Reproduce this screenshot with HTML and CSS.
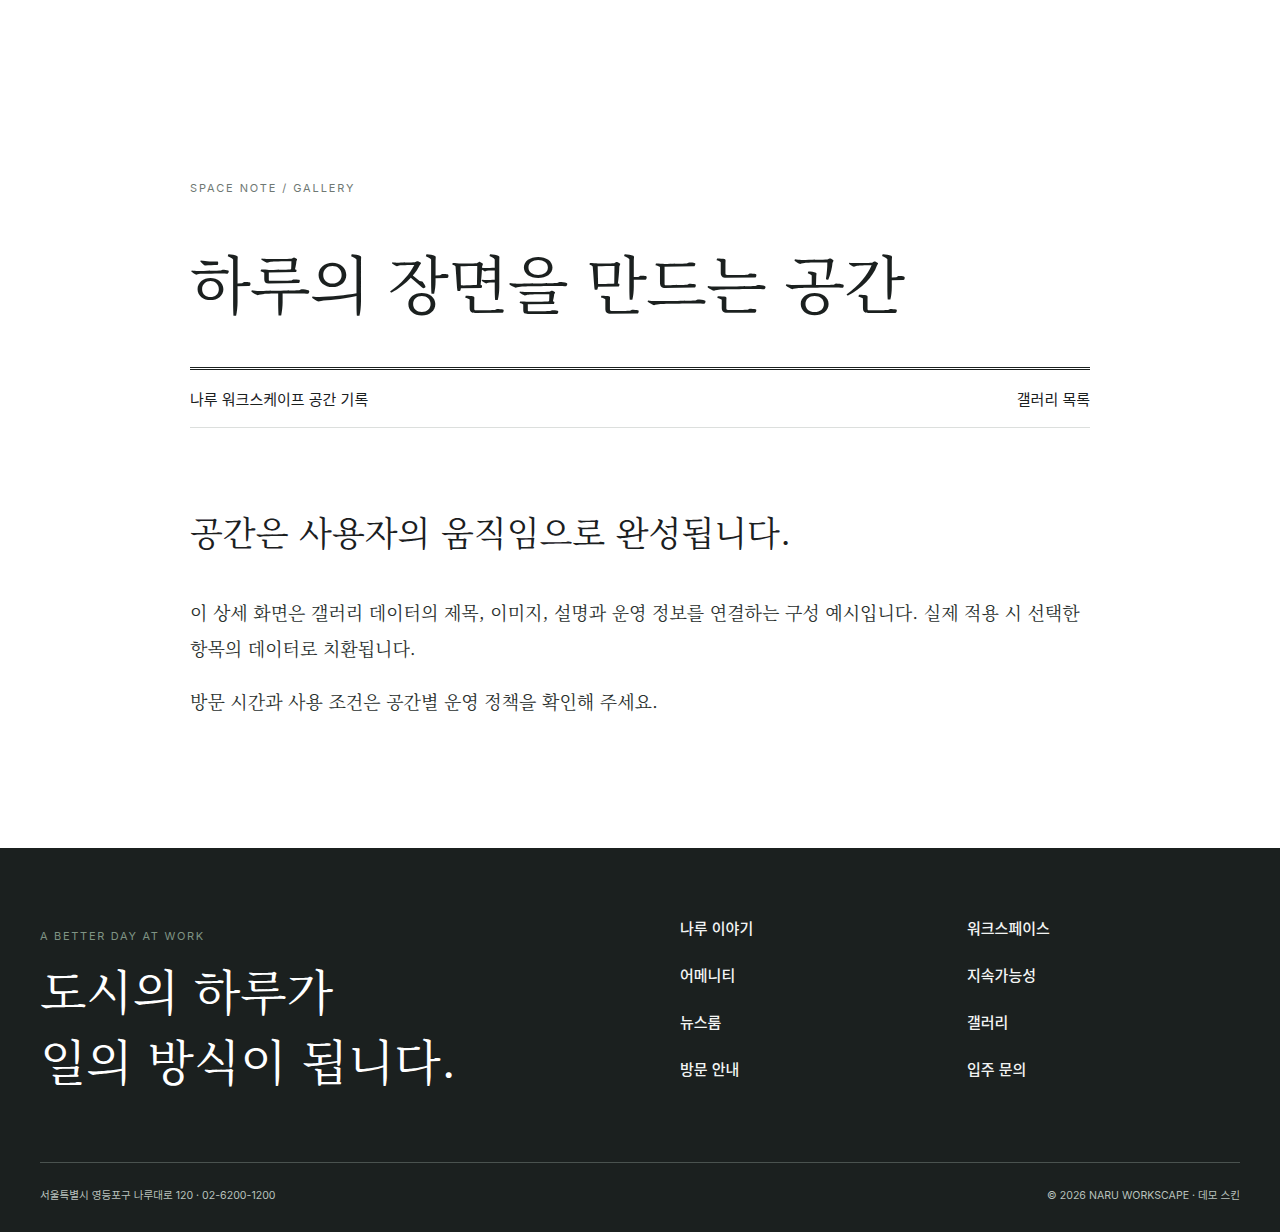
FILE: index.html
```html
<!DOCTYPE html>
<html lang="ko">
<head>
<meta charset="utf-8">
<title>하루의 장면을 만드는 공간</title>
<link rel="stylesheet" href="styles.css">
</head>
<body>
<main class="detail">
  <p class="eyebrow">SPACE NOTE / GALLERY</p>
  <h1 class="title">하루의 장면을 만드는 공간</h1>
  <div class="meta">
    <span>나루 워크스케이프 공간 기록</span>
    <a class="meta-link" href="#">갤러리 목록</a>
  </div>
  <section class="body">
    <h2 class="lead">공간은 사용자의 움직임으로 완성됩니다.</h2>
    <p>이 상세 화면은 갤러리 데이터의 제목, 이미지, 설명과 운영 정보를 연결하는 구성 예시입니다. 실제 적용 시 선택한 항목의 데이터로 치환됩니다.</p>
    <p>방문 시간과 사용 조건은 공간별 운영 정책을 확인해 주세요.</p>
  </section>
</main>
<footer class="footer">
  <div class="footer-top">
    <div class="footer-brand">
      <p class="footer-eyebrow">A BETTER DAY AT WORK</p>
      <p class="footer-heading">도시의 하루가<br>일의 방식이 됩니다.</p>
    </div>
    <nav class="footer-nav">
      <a href="#">나루 이야기</a>
      <a href="#">워크스페이스</a>
      <a href="#">어메니티</a>
      <a href="#">지속가능성</a>
      <a href="#">뉴스룸</a>
      <a href="#">갤러리</a>
      <a href="#">방문 안내</a>
      <a href="#">입주 문의</a>
    </nav>
  </div>
  <div class="footer-bottom">
    <span>서울특별시 영등포구 나루대로 120 · 02-6200-1200</span>
    <span>© 2026 NARU WORKSCAPE · 데모 스킨</span>
  </div>
</footer>
</body>
</html>
```

FILE: styles.css
```css
* { box-sizing: border-box; }
html, body { margin: 0; padding: 0; }
body {
  background: #ffffff;
  color: #1b201f;
  font-family: "Inter", "Noto Sans CJK KR", sans-serif;
}
a { color: inherit; text-decoration: none; }

.detail {
  width: 900px;
  margin: 0 auto;
  padding: 180px 0 110px;
}
.eyebrow {
  margin: 0;
  font-size: 11px;
  line-height: 16px;
  letter-spacing: 1.9px;
  color: #6f7873;
}
.title {
  margin: 47px 0 48px;
  font-family: "Noto Serif CJK KR", "Noto Sans CJK KR", serif;
  font-weight: 400;
  font-size: 63px;
  line-height: 76px;
  letter-spacing: -1px;
  color: #1b201f;
}
.meta {
  display: flex;
  justify-content: space-between;
  align-items: center;
  border-top: 3px double #1b201f;
  border-bottom: 1px solid #dcdfdd;
  height: 61px;
  font-family: "Noto Sans CJK KR", sans-serif;
  font-size: 15px;
  color: #1b201f;
}
.body { padding-top: 79px; }
.lead {
  margin: 0 0 38px;
  font-family: "Noto Serif CJK KR", "Noto Sans CJK KR", serif;
  font-weight: 400;
  font-size: 34px;
  line-height: 50px;
  color: #1b201f;
}
.body p {
  margin: 0 0 18px;
  font-family: "Noto Serif CJK KR", "Noto Sans CJK KR", serif;
  font-size: 18px;
  line-height: 35.5px;
  color: #2a302e;
}

.footer {
  background: #1b201f;
  color: #f2f4f3;
  padding: 70px 40px 29px;
}
.footer-top {
  display: grid;
  grid-template-columns: 600px 1fr;
  column-gap: 40px;
  padding-bottom: 67px;
  border-bottom: 1px solid #4a524f;
}
.footer-brand { padding-top: 10px; }
.footer-eyebrow {
  margin: 0;
  font-size: 11px;
  line-height: 16px;
  letter-spacing: 1.7px;
  color: #7f9484;
}
.footer-heading {
  margin: 11px 0 0;
  font-family: "Noto Serif CJK KR", "Noto Sans CJK KR", serif;
  font-size: 48px;
  line-height: 70px;
  color: #ffffff;
}
.footer-nav {
  display: grid;
  grid-template-columns: 287px 1fr;
  row-gap: 27px;
  align-content: start;
}
.footer-nav a {
  font-family: "Noto Sans CJK KR", sans-serif;
  font-size: 15px;
  line-height: 20px;
  font-weight: 500;
  color: #f2f4f3;
}
.footer-bottom {
  display: flex;
  justify-content: space-between;
  padding-top: 25px;
  font-size: 10.6px;
  line-height: 16px;
  color: #b9c2bd;
}
```
